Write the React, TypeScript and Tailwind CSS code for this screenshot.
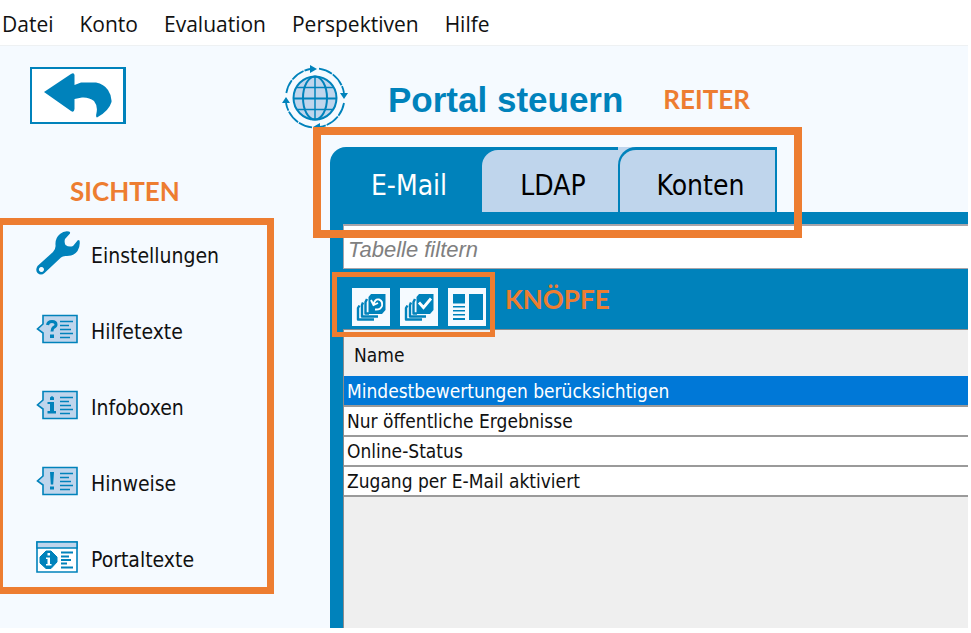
import React from "react";

const BLUE = "#0082bb";
const PALE = "#bfd5ec";

const menuItems = ["Datei", "Konto", "Evaluation", "Perspektiven", "Hilfe"];

const rows = [
  "Mindestbewertungen berücksichtigen",
  "Nur öffentliche Ergebnisse",
  "Online-Status",
  "Zugang per E-Mail aktiviert",
];

function BackIcon() {
  return (
    <svg width="68" height="46" viewBox="0 0 68 46" aria-hidden="true">
      <path
        d="M0 19 L27 1 Q30 -1 30.500 2 V12 L37 9.500 H52 Q60 11 64 17 Q68 23 67.500 29 Q65 38 53 44.500 Q51.500 44 52.500 40 Q54 33 50 28 Q45 24 38 24.500 L30.500 26 V36 Q30 40 27 38 Z"
        fill={BLUE}
      />
    </svg>
  );
}

function GlobeIcon() {
  return (
    <svg className="shrink-0" width="66" height="66" viewBox="0 0 66 66" fill="none" stroke={BLUE} aria-hidden="true">
      <circle cx="33" cy="33" r="21.500" fill={PALE} strokeWidth="2" />
      <path d="M33 11.500 V54.500 M15 22.500 H51 M15 44.500 H51" strokeWidth="1.500" />
      <path d="M11.500 33.500 H54.500" strokeWidth="2" />
      <ellipse cx="33" cy="33" rx="12" ry="21.500" strokeWidth="2" />
      <path
        d="M37 3.700 A29.500 29.500 0 0 1 62 28 M62 38 A29.500 29.500 0 0 1 38 62 M30 62.400 A29.500 29.500 0 0 1 4 38 M4.300 28 A29.500 29.500 0 0 1 28 4"
        strokeWidth="1.800"
        strokeDasharray="14 1"
      />
      <path d="M28 0 L35 4 L28 8 Z M58 28 L66 28 L62 34 Z M38 58 L31 62 L38 66 Z M0 38 L8 38 L4 32 Z" fill={BLUE} stroke="none" />
    </svg>
  );
}

function WrenchIcon() {
  return (
    <svg width="44" height="44" viewBox="0 0 44 44" aria-hidden="true">
      <path
        fillRule="evenodd"
        fill={BLUE}
        d="M33 0.500 Q28 -0.500 24 3 Q19 7 19.500 14 Q20 18 17 21 L1.500 35 Q-1 39 1.500 42 Q5 45 8.500 42 L25 26.500 Q27 24.500 31 25 Q38 25 41.500 20 Q44.500 15 43.500 9.500 L42 9 L37 15 Q33 16.500 29.500 14 Q28 11 29 8 L34 2.500 Q34.500 1 33 0.500 Z M5.500 36 A2.500 2.500 0 1 1 5.400 36 Z"
      />
    </svg>
  );
}

function NoteIcon({ kind }: { kind: "question" | "info" | "alert" }) {
  return (
    <svg width="44" height="30" viewBox="0 0 44 30" fill="none" aria-hidden="true">
      <path d="M7 1.500 H41 V28.500 H7 V19 L1.500 15 L7 10 Z" fill={PALE} stroke={BLUE} strokeWidth="1.600" />
      <path d="M24 7.500 H37 M24 11.500 H33 M24 15.500 H35 M24 19.500 H37 M24 23.500 H34" stroke={BLUE} strokeWidth="1.500" />
      {kind === "question" && (
        <g>
          <path d="M11.500 11 Q12 7.500 16 7.500 Q20 7.500 20 10.500 Q20 12.500 17.500 13.500 Q16 14.500 16 17.500" stroke={BLUE} strokeWidth="3" />
          <path d="M14 20.500 H18 V24 H14 Z" fill={BLUE} />
        </g>
      )}
      {kind === "info" && (
        <path d="M14 7.500 L16 6 L18 7.500 V10 H14 Z M11.500 12 H18 V21 H20 V23.500 H11.500 V21 H14 V14 H11.500 Z" fill={BLUE} />
      )}
      {kind === "alert" && <path d="M14 6 H18 L17.200 18.500 H14.800 Z M14 20.500 H18 V23.500 H14 Z" fill={BLUE} />}
    </svg>
  );
}

function PortalIcon() {
  return (
    <svg width="44" height="32" viewBox="0 0 44 32" fill="none" aria-hidden="true">
      <path d="M1 1 H41 V31 H1 Z" fill="white" stroke={BLUE} strokeWidth="1.600" />
      <path d="M1 1 H41 V7 H1 Z" fill={PALE} stroke={BLUE} strokeWidth="1.500" />
      <path d="M10 10 H15 L21 16 V21 L15 27.500 H10 L4 22 V16 Z" fill={BLUE} stroke={BLUE} strokeLinejoin="round" />
      <path d="M11.500 12 H14 V14.500 H11.500 Z M10 16.500 H14 V23 H15.500 V24.500 H10 V23 H11.500 V18 H10 Z" fill="white" />
      <path d="M25 11.500 H37 M25 15.500 H33 M25 19 H35 M25 22.500 H31 M25 26.500 H37" stroke={BLUE} strokeWidth="2" />
    </svg>
  );
}

function StackIcon({ kind }: { kind: "reset" | "check" }) {
  return (
    <svg width="38" height="38" viewBox="0 0 38 38" fill="none" aria-hidden="true">
      <path
        d="M7.500 17.500 L6 20 V31.500 H22 M11 14.500 L10 17 V28.500 H26 M15 11 L13.500 14 V25.500 H17"
        stroke={BLUE}
        strokeWidth="2.400"
        strokeLinejoin="round"
      />
      <path d="M19 6 H33.500 V22 L30 26 H16.500 V9 Z" fill={BLUE} />
      {kind === "reset" ? (
        <path d="M19 12 L21.500 17 L26 15 M21.500 16.500 Q23 10.500 27 11.500 Q31 13 30 18 Q28.500 22 23 21.500" stroke="white" strokeWidth="1.900" />
      ) : (
        <path d="M19 14.500 L23.500 19.500 L31 10.500" stroke="white" strokeWidth="2.800" />
      )}
    </svg>
  );
}

function ColumnsIcon() {
  return (
    <svg width="38" height="38" viewBox="0 0 38 38" fill={BLUE} aria-hidden="true">
      <path d="M5 6 H17 V15.500 H5 Z M21 6 H35 V32 H21 Z M5 18 H17 V19.500 H5 Z M5 22 H17 V23.500 H5 Z M5 26 H17 V27.500 H5 Z M5 30 H17 V32 H5 Z" />
    </svg>
  );
}

const views: { label: string; icon: React.ReactNode }[] = [
  { label: "Einstellungen", icon: <WrenchIcon /> },
  { label: "Hilfetexte", icon: <NoteIcon kind="question" /> },
  { label: "Infoboxen", icon: <NoteIcon kind="info" /> },
  { label: "Hinweise", icon: <NoteIcon kind="alert" /> },
  { label: "Portaltexte", icon: <PortalIcon /> },
];

const tools: { label: string; icon: React.ReactNode }[] = [
  { label: "Zurücksetzen", icon: <StackIcon kind="reset" /> },
  { label: "Auswählen", icon: <StackIcon kind="check" /> },
  { label: "Ansicht", icon: <ColumnsIcon /> },
];

function Callout({ children, className = "" }: { children: React.ReactNode; className?: string }) {
  return (
    <span className={`font-['Lato',sans-serif] text-[26px] font-bold text-[#ed7d31] ${className}`}>{children}</span>
  );
}

export default function App() {
  return (
    <div className="flex min-h-screen flex-col overflow-x-hidden bg-white pr-[3px] pb-[5px] font-['DejaVu_Sans_Condensed','DejaVu_Sans',sans-serif] text-[#111]">
      <nav aria-label="Menü" className="flex h-[46px] items-center gap-[26px] border-b border-[#eef1f3] pt-1 pl-[2px] font-['Open_Sans',sans-serif] text-[21px]">
        {menuItems.map((item) => (
          <button key={item} type="button">
            {item}
          </button>
        ))}
      </nav>

      <div className="flex flex-1 flex-col bg-[#f5faff]">
        <header className="flex h-[101px] items-center pt-[2px] pl-[30px]">
          <button
            type="button"
            aria-label="Zurück"
            className="mb-1 flex h-[57px] w-24 shrink-0 items-center justify-center border-2 border-r-[3px] border-[#0082bb] bg-white"
          >
            <BackIcon />
          </button>
          <div className="ml-[156px] flex items-center">
            <GlobeIcon />
            <h1 className="ml-10 mt-1 whitespace-nowrap font-['Liberation_Sans',sans-serif] text-[35px] leading-10 font-bold text-[#0082bb]">
              Portal steuern
            </h1>
            <Callout className="ml-10 mt-1">REITER</Callout>
          </div>
        </header>

        <div className="flex flex-1">
          <aside className="w-[330px] shrink-0 pt-6">
            <Callout className="block pl-[70px] leading-10">SICHTEN</Callout>
            <nav aria-label="Sichten" className="-ml-1 mt-[7px] flex w-[278px] flex-col gap-6 border-[7px] border-[#ed7d31] pt-[2px] pb-1 pl-[33px]">
              {views.map((view) => (
                <button key={view.label} type="button" className="flex h-[52px] items-center gap-[11px] text-left text-[21px]">
                  {view.icon}
                  <span className="pt-2">{view.label}</span>
                </button>
              ))}
            </nav>
          </aside>

          <main className="flex min-w-0 flex-1 flex-col">
            <div className="relative flex h-[65px] text-[28px]" role="tablist">
              <button type="button" role="tab" aria-selected="true" className="w-[152px] rounded-tl-[16px] bg-[#0082bb] pt-3 pl-[6px] text-white">
                E-Mail
              </button>
              <button type="button" role="tab" aria-selected="false" className="flex w-[136px] bg-[#0082bb] pt-[3px] text-black">
                <span className="flex h-full flex-1 items-center justify-center rounded-tl-[16px] bg-[#bfd5ec] pt-[9px] pl-[6px]">LDAP</span>
              </button>
              <button type="button" role="tab" aria-selected="false" className="flex w-[159px] bg-[#bfd5ec] text-black">
                <span className="flex h-full flex-1 items-center justify-center rounded-tl-[18px] border-x-2 border-t-[3px] border-[#0082bb] pt-[9px] pl-[6px]">
                  Konten
                </span>
              </button>
              <div className="pointer-events-none absolute -top-5 -left-[17px] z-10 h-[111px] w-[489px] border-8 border-[#ed7d31]" />
            </div>

            <div className="flex flex-1 flex-col border-t-[12px] border-l-[13px] border-[#0082bb]">
              <input
                type="text"
                aria-label="Tabelle filtern"
                placeholder="Tabelle filtern"
                className="h-[45px] w-full border-t-2 border-b border-l border-[#a9a5aa] bg-white pt-[6px] pl-1 font-['Liberation_Sans',sans-serif] text-[22px] italic outline-none placeholder:text-[#808080]"
              />
              <div className="flex h-[60px] items-start bg-[#0082bb] pl-[9px]">
                <div className="relative mt-[19px] flex gap-[10px]">
                  {tools.map((tool) => (
                    <button key={tool.label} type="button" aria-label={tool.label} className="size-[38px] bg-[#f5faff]">
                      {tool.icon}
                    </button>
                  ))}
                  <div className="pointer-events-none absolute -top-4 -left-5 z-10 h-[65px] w-[163px] border-[5px] border-[#ed7d31]" />
                </div>
                <Callout className="ml-[19px] leading-[60px]">KNÖPFE</Callout>
              </div>
              <div className="flex-1 border-t border-l border-[#8c8c8c] bg-[#efefef]">
                <table className="w-full border-collapse text-left text-[19px]">
                  <thead>
                    <tr className="h-[46px]">
                      <th className="pt-1 pl-[10px] font-normal">Name</th>
                    </tr>
                  </thead>
                  <tbody>
                    {rows.map((row, index) => (
                      <tr
                        key={row}
                        className={
                          index === 0
                            ? "h-[30px] border-b-2 border-[#9a9a9a] bg-[#0078d7] text-white"
                            : "h-[30px] border-b-2 border-[#9a9a9a] bg-white"
                        }
                      >
                        <td className="p-0 pl-[3px] leading-7">{row}</td>
                      </tr>
                    ))}
                  </tbody>
                </table>
              </div>
            </div>
          </main>
        </div>
      </div>
    </div>
  );
}
